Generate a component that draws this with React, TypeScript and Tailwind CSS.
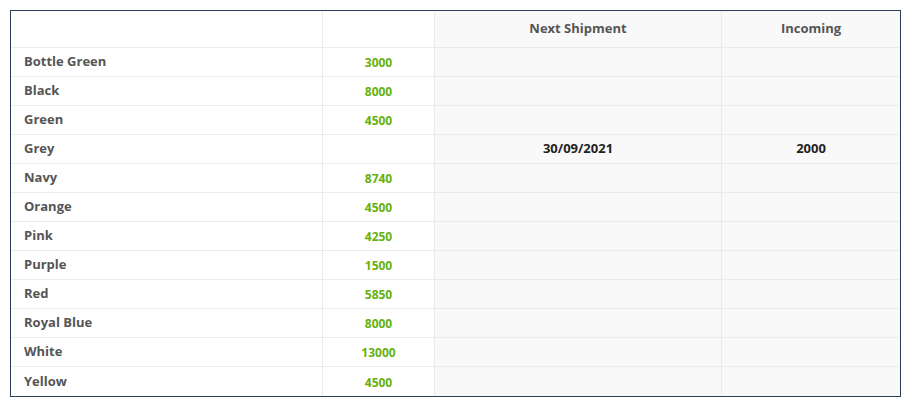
const rows: { name: string; qty: string; next?: string; incoming?: string }[] = [
  { name: 'Bottle Green', qty: '3000' },
  { name: 'Black', qty: '8000' },
  { name: 'Green', qty: '4500' },
  { name: 'Grey', qty: '', next: '30/09/2021', incoming: '2000' },
  { name: 'Navy', qty: '8740' },
  { name: 'Orange', qty: '4500' },
  { name: 'Pink', qty: '4250' },
  { name: 'Purple', qty: '1500' },
  { name: 'Red', qty: '5850' },
  { name: 'Royal Blue', qty: '8000' },
  { name: 'White', qty: '13000' },
  { name: 'Yellow', qty: '4500' },
]

export default function App() {
  return (
    <div className="min-h-[404px] bg-white p-[10px] font-['Open_Sans',sans-serif]">
      <div className="w-[891px] border border-[#2a3f5d]">
        <div className="grid grid-cols-[312px_112px_287px_178px]">
          <div className="h-[37px] border-b border-r border-[#ebebeb] bg-white" />
          <div className="h-[37px] border-b border-r border-[#ebebeb] bg-white" />
          <div className="flex h-[37px] items-center justify-center border-b border-r border-[#ebebeb] bg-[#f9f9f9] text-[13px] font-bold text-[#555]">
            Next Shipment
          </div>
          <div className="flex h-[37px] items-center justify-center border-b border-[#ebebeb] bg-[#f9f9f9] text-[13px] font-bold text-[#555]">
            Incoming
          </div>

          {rows.map((row, i) => {
            const last = i === rows.length - 1
            const line = last ? '' : 'border-b'
            return (
              <div key={row.name} className="contents">
                <div
                  className={`flex h-[29px] items-center border-r border-[#ebebeb] bg-white pl-[13px] text-[13px] font-bold text-[#555] ${line}`}
                >
                  {row.name}
                </div>
                <div
                  className={`flex h-[29px] items-center justify-center border-r border-[#ebebeb] bg-white pt-[2px] text-[12px] font-bold text-[#66b10f] ${line}`}
                >
                  {row.qty}
                </div>
                <div
                  className={`flex h-[29px] items-center justify-center border-r border-[#ebebeb] bg-[#f9f9f9] text-[13px] font-bold text-[#222] ${line}`}
                >
                  {row.next ?? ''}
                </div>
                <div
                  className={`flex h-[29px] items-center justify-center border-[#ebebeb] bg-[#f9f9f9] text-[13px] font-bold text-[#222] ${line}`}
                >
                  {row.incoming ?? ''}
                </div>
              </div>
            )
          })}
        </div>
      </div>
    </div>
  )
}
